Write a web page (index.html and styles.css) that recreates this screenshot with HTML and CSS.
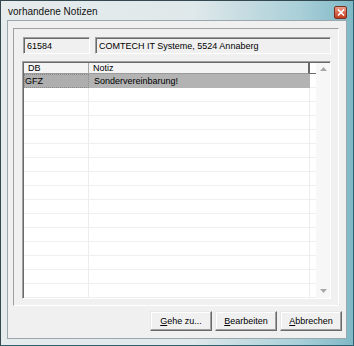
FILE: index.html
```
<!DOCTYPE html>
<html>
<head>
<meta charset="utf-8">
<link rel="stylesheet" href="styles.css">
</head>
<body>
<div class="window">
  <div class="titlebar">
    <span class="title">vorhandene Notizen</span>
    <span class="close">
      <svg width="8" height="7" viewBox="0 0 8 7"><path d="M1 0.5 L7 6.5 M7 0.5 L1 6.5" stroke="#fff" stroke-width="1.6"/></svg>
    </span>
  </div>
  <div class="client">
    <div class="panel">
      <div class="fields">
        <div class="edit e1">61584</div>
        <div class="edit e2">COMTECH IT Systeme, 5524 Annaberg</div>
      </div>
      <div class="list">
        <div class="grid">
          <div class="header">
            <div class="hcell c1">DB</div>
            <div class="hcell c2">Notiz</div>
            <div class="hcell c3"></div>
          </div>
          <div class="rows">
            <div class="row sel">
              <div class="cell c1">GFZ</div>
              <div class="cell c2">Sondervereinbarung!</div>
            </div>
          </div>
        </div>
        <div class="scroll">
          <svg class="arr" width="7" height="4" viewBox="0 0 7 4"><path d="M0 4 L3.5 0 L7 4 Z" fill="#a8a8a8"/></svg>
          <svg class="arr" width="7" height="4" viewBox="0 0 7 4"><path d="M0 0 L3.5 4 L7 0 Z" fill="#a8a8a8"/></svg>
        </div>
      </div>
    </div>
    <div class="buttons">
      <div class="btn"><u>G</u>ehe zu...</div>
      <div class="btn"><u>B</u>earbeiten</div>
      <div class="btn"><u>A</u>bbrechen</div>
    </div>
  </div>
</div>
</body>
</html>
```
FILE: styles.css
```
html, body {
  margin: 0;
  padding: 0;
  background: #1f3238;
}
body {
  font-family: "Liberation Sans", Arial, sans-serif;
  font-size: 9px;
  color: #000;
}
.window {
  width: 354px;
  height: 346px;
  box-sizing: border-box;
  border: 1px solid #34484f;
  border-bottom-color: #2b6170;
  border-right-color: #2b6170;
  background: linear-gradient(to right, #e6ebec 0%, #dfe8ea 55%, #a9cfd8 85%, #7fb8c6 100%);
  padding: 0 6px 6px 6px;
  display: flex;
  flex-direction: column;
}
.titlebar {
  height: 19px;
  display: flex;
  align-items: center;
  flex-shrink: 0;
}
.title {
  font-size: 10px;
  margin-left: 1px;
  margin-top: 1px;
  color: #111;
}
.close {
  margin-left: auto;
  margin-top: 4px;
  width: 11px;
  height: 11px;
  border: 1px solid #7a2f22;
  border-radius: 2px;
  background: linear-gradient(to bottom, #eaa38f 0%, #d9674d 50%, #c23d22 100%);
  display: flex;
  align-items: center;
  justify-content: center;
}
.client {
  flex: 1;
  background: #f0f0f0;
  border: 1px solid #9aa8ad;
  display: flex;
  flex-direction: column;
  padding: 7px 0 0 5px;
}
.panel {
  height: 278px;
  box-sizing: border-box;
  margin-right: 7px;
  border: 1px solid;
  border-color: #a0a0a0 #ffffff #ffffff #a0a0a0;
  padding: 8px 7px 6px 9px;
  display: flex;
  flex-direction: column;
}
.fields {
  display: flex;
  gap: 5px;
  height: 17px;
  flex-shrink: 0;
}
.edit {
  box-sizing: border-box;
  height: 17px;
  border: 1px solid;
  border-color: #a0a0a0 #ffffff #ffffff #a0a0a0;
  box-shadow: inset 1px 1px 0 #696969;
  padding: 3px 0 0 3px;
  white-space: nowrap;
  overflow: hidden;
}
.e1 { width: 67px; }
.e2 { flex: 1; }
.list {
  flex: 1;
  margin-top: 7px;
  margin-left: -1px;
  border: 1px solid;
  border-color: #a0a0a0 #ffffff #ffffff #a0a0a0;
  box-shadow: inset 1px 1px 0 #696969;
  padding: 1px 0 0 1px;
  background: #fff;
  display: flex;
}
.grid {
  flex: 1;
  display: flex;
  flex-direction: column;
}
.header {
  height: 11px;
  display: flex;
  flex-shrink: 0;
}
.hcell {
  box-sizing: border-box;
  height: 11px;
  background: #f4f4f4;
  border-bottom: 1px solid #9a9a9a;
  border-right: 1px solid #a8a8a8;
  padding: 1px 0 0 4px;
  line-height: 9px;
}
.hcell.c1 { width: 65px; }
.hcell.c2 { width: 221px; border-right: 2px solid #6a6a6a; }
.hcell.c3 { flex: 1; background: #fff; border-right: none; border-bottom-color: #6a6a6a; }
.rows {
  flex: 1;
  background-image:
    linear-gradient(to right, transparent 64px, #ededed 64px, #ededed 65px, transparent 65px, transparent 285px, #ededed 285px, #ededed 286px, transparent 286px),
    repeating-linear-gradient(to bottom, transparent 0, transparent 13px, #efefef 13px, #efefef 14px);
}
.row {
  height: 14px;
  display: flex;
  width: 286px;
}
.row.sel {
  background: #b3b3b3;
}
.cell {
  box-sizing: border-box;
  height: 14px;
  line-height: 14px;
  white-space: nowrap;
}
.cell.c1 {
  width: 65px;
  padding-left: 1px;
  background: #aeaeae;
  outline: 1px dotted #8a8a8a;
  outline-offset: -1px;
}
.cell.c2 { flex: 1; padding-left: 5px; }
.scroll {
  width: 14px;
  background: #f7f7f7;
  display: flex;
  flex-direction: column;
  align-items: center;
  justify-content: space-between;
  padding: 4px 0 5px 0;
}
.arr { display: block; }
.buttons {
  display: flex;
  justify-content: flex-end;
  gap: 3px;
  margin-top: 5px;
  padding-right: 4px;
}
.btn {
  box-sizing: border-box;
  width: 62px;
  height: 20px;
  border: 1px solid;
  border-color: #e8e8e8 #696969 #696969 #e8e8e8;
  box-shadow: inset -1px -1px 0 #a0a0a0, inset 1px 1px 0 #ffffff;
  background: #f0f0f0;
  display: flex;
  align-items: center;
  justify-content: center;
  padding-bottom: 1px;
}
.btn u { text-decoration: underline; }
```
